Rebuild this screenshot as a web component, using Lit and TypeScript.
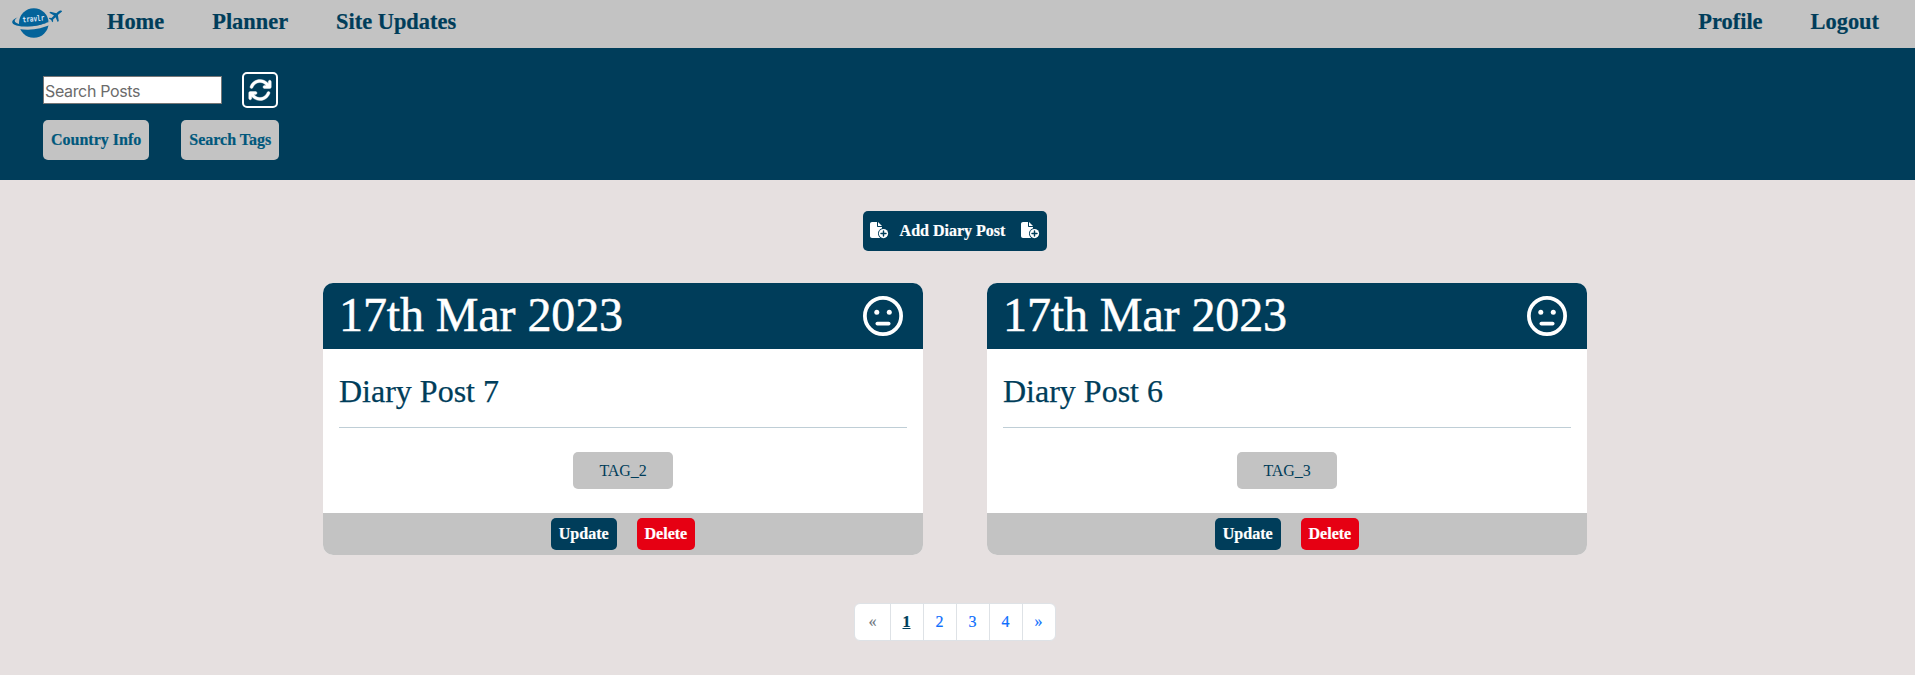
import { LitElement, html, css, svg } from "lit";
import { customElement, property } from "lit/decorators.js";

const fileCirclePlus = html`<svg class="file-icon" viewBox="0 0 576 512" fill="currentColor">${svg`<path d="M0 64C0 28.700 28.700 0 64 0H224V128c0 17.700 14.300 32 32 32H384v38.600C310.100 219.500 256 287.400 256 368c0 59.100 29.100 111.300 73.700 143.300c-3.200 .5-6.400 .7-9.700 .7H64c-35.300 0-64-28.700-64-64V64zm384 64H256V0L384 128z"/><circle cx="432" cy="368" r="148"/><path d="M432 288V448M352 368H512" stroke="#003d5a" stroke-width="46" stroke-linecap="round"/>`}</svg>`;

@customElement("diary-card")
export class DiaryCard extends LitElement {
  @property() date = "";
  @property() heading = "";
  @property() tag = "";

  static styles = css`
    :host { display: flex; flex-direction: column; width: 600px; height: 272px; border-radius: 10px; overflow: hidden; background: #fff; color: #003d5a; }
    .head { display: flex; justify-content: space-between; height: 66px; padding: 0 20px 0 16px; box-sizing: border-box; background: #003d5a; color: #fff; }
    .date { margin: 3px 0 0; font-size: 48px; font-weight: 400; line-height: 58px; letter-spacing: -0.1px; -webkit-text-stroke: 0.5px #fff; }
    .face { width: 40px; height: 40px; margin-top: 13px; }
    .body { flex: 1; padding: 0 16px; display: flex; flex-direction: column; align-items: center; }
    .title { align-self: stretch; margin: 0; padding: 23px 0 17px; font-size: 32px; font-weight: 400; line-height: 38px; border-bottom: 1px solid #bfced6; -webkit-text-stroke: 0.25px #003d5a; }
    .tag { margin-top: 24px; width: 100px; height: 37px; line-height: 37px; border-radius: 5px; background: #c3c3c3; text-align: center; font-size: 16px; letter-spacing: -0.1px; }
    .foot { display: flex; justify-content: center; align-items: center; gap: 20px; height: 42px; background: #c3c3c3; }
    .btn { height: 32px; padding: 0 8px; border: 0; border-radius: 5px; background: #003d5a; color: #fff; font: bold 16px/32px "Liberation Serif", serif; -webkit-text-stroke: 0.2px #fff; }
    .danger { background: #e60013; }
  `;

  render() {
    return html`
      <div class="head">
        <h1 class="date">${this.date}</h1>
        <svg class="face" viewBox="0 0 512 512">
          <circle cx="256" cy="256" r="232" fill="none" stroke="#fff" stroke-width="48" />
          <circle cx="176.400" cy="208" r="32" fill="#fff" />
          <circle cx="336.400" cy="208" r="32" fill="#fff" />
          <path d="M184 352H328" stroke="#fff" stroke-width="48" stroke-linecap="round" />
        </svg>
      </div>
      <div class="body">
        <h2 class="title">${this.heading}</h2>
        <div class="tag">${this.tag}</div>
      </div>
      <div class="foot">
        <button class="btn">Update</button>
        <button class="btn danger">Delete</button>
      </div>`;
  }
}

@customElement("app-root")
export class AppRoot extends LitElement {
  static styles = css`
    :host { display: block; min-height: 675px; background: #e6e0e0; font-family: "Liberation Serif", serif; color: #003d5a; }
    .nav { display: flex; align-items: center; gap: 48px; height: 48px; padding: 0 36px 0 11px; box-sizing: border-box; background: #c3c3c3; font-size: 22.4px; font-weight: bold; -webkit-text-stroke: 0.2px #003d5a; }
    .nav a { line-height: 34px; padding-bottom: 4px; }
    .logo { width: 52px; height: 32px; margin: 0 -4px 2px 0; -webkit-text-stroke: 0; }
    .logo text { font: bold 8px "DejaVu Sans Mono", monospace; fill: #dfe6f5; }
    .spacer { flex: 1; margin-left: -48px; }
    .banner { display: flex; flex-direction: column; gap: 12px; height: 132px; padding: 24px 43px 0; box-sizing: border-box; background: #003d5a; }
    .row { display: flex; align-items: center; }
    .search { width: 179px; height: 28px; box-sizing: border-box; margin: 0; padding: 1px 1px 0; border: 1px solid #767676; border-radius: 0; background: #fff; font: 16px Inter, sans-serif; letter-spacing: -0.35px; }
    .search::placeholder { color: #6b6b6b; }
    .refresh { display: flex; align-items: center; justify-content: center; width: 36px; height: 36px; margin-left: 20px; padding: 0 1px 0 0; box-sizing: border-box; border: 2px solid #fff; border-radius: 5px; background: none; color: #fff; }
    .refresh svg { width: 24px; height: 24px; stroke: #fff; stroke-width: 8; }
    .filters { gap: 32px; }
    .filter { height: 40px; padding: 0 8px; border: 0; border-radius: 5px; background: #c3c3c3; color: #00587c; font: bold 16px "Liberation Serif", serif; -webkit-text-stroke: 0.2px #00587c; }
    .main { display: flex; flex-direction: column; align-items: center; padding: 31px 5px 0 0; }
    .add { display: flex; align-items: center; justify-content: space-between; width: 184px; height: 40px; padding: 0 8px 0 7px; border: 0; border-radius: 5px; background: #003d5a; color: #fff; font: bold 16px "Liberation Serif", serif; -webkit-text-stroke: 0.2px #fff; }
    .add-label { margin-right: 4px; }
    .file-icon { display: block; width: 18px; height: 16px; margin-bottom: 2px; overflow: visible; }
    .cards { display: flex; gap: 64px; margin-top: 32px; }
    .pages { display: flex; height: 38px; box-sizing: border-box; margin: 48px 0 0; padding: 0; list-style: none; border: 1px solid #dee2e6; border-radius: 6px; background: #fff; overflow: hidden; font-size: 16px; line-height: 36px; color: #0d6efd; }
    .page { width: 33px; box-sizing: border-box; padding-right: 1px; border-left: 1px solid #dee2e6; text-align: center; -webkit-text-stroke: 0.2px currentColor; }
    .first { width: 35px; padding: 0; border-left: 0; color: #6c757d; }
    .current { color: #003d5a; font-weight: bold; text-decoration: underline; }
  `;

  render() {
    return html`
      <nav class="nav">
        <svg class="logo" viewBox="0 0 52 32">
          <circle cx="22.800" cy="16" r="14.800" fill="#04639a" />
          <path d="M6.500 10.500C-1 14.500-1 19 8 20.300C19 22 30 20.500 40 15.500" fill="none" stroke="#c3c3c3" stroke-width="3.600" />
          <path d="M7 10.200C.5 12.500-1.300 16.600 5.500 18.400C16 21 28 19.300 40 14.200C30 17.700 17 19.200 8 17C2 15.500 3 12.300 7 10.200Z" fill="#04639a" />
          <text x="11.500" y="14.500" textLength="22" lengthAdjust="spacingAndGlyphs" transform="rotate(-5 22 12)">travlr</text>
          <path d="M51 4C50.500 3 48.500 3.500 47 4.800L45.300 6.300L39.500 4.700L38.300 5.700L43 8.500L40.500 11L38.500 10.800L37.700 11.600L40.200 12.900L41.200 15.300L42.100 14.500L42.100 12.500L44.600 10.300L46.600 15L47.800 14L46.900 8L48.600 6.500C50 5.300 51.400 4.700 51 4Z" fill="#04639a" />
        </svg>
        <a>Home</a><a>Planner</a><a>Site Updates</a>
        <span class="spacer"></span>
        <a>Profile</a><a>Logout</a>
      </nav>
      <header class="banner">
        <div class="row">
          <input class="search" placeholder="Search Posts" />
          <button class="refresh">
            <svg viewBox="0 0 512 512" fill="currentColor"><path d="M105.100 202.600c7.700-21.800 20.200-42.300 37.800-59.800c62.500-62.500 163.800-62.500 226.300 0L386.300 160H352c-17.700 0-32 14.300-32 32s14.300 32 32 32H463.900c17.700 0 32-14.300 32-32V80c0-17.700-14.300-32-32-32s-32 14.300-32 32v35.200L414.400 97.600c-87.500-87.500-229.300-87.500-316.800 0C73.200 122 55.600 150.700 44.800 181.400c-5.900 16.700 2.900 34.900 19.500 40.800s34.900-2.900 40.800-19.500zM39 289.300c-5 1.500-9.800 4.200-13.700 8.200c-4 4-6.700 8.800-8.100 14c-.3 1.200-.6 2.500-.8 3.800c-.3 1.700-.4 3.400-.4 5.100V432c0 17.700 14.300 32 32 32s32-14.300 32-32V396.900l17.600 17.500c87.500 87.400 229.300 87.400 316.700 0c24.400-24.400 42.100-53.100 52.900-83.700c5.900-16.700-2.900-34.900-19.500-40.800s-34.900 2.900-40.800 19.500c-7.700 21.800-20.200 42.300-37.800 59.800c-62.500 62.500-163.800 62.500-226.300 0l-.1-.1L125.600 352H160c17.700 0 32-14.300 32-32s-14.300-32-32-32H48.400c-1.600 0-3.200 .1-4.800 .3s-3.100 .5-4.600 1z"/></svg>
          </button>
        </div>
        <div class="row filters">
          <button class="filter">Country Info</button>
          <button class="filter">Search Tags</button>
        </div>
      </header>
      <main class="main">
        <button class="add">${fileCirclePlus}<span class="add-label">Add Diary Post</span>${fileCirclePlus}</button>
        <section class="cards">
          <diary-card date="17th Mar 2023" heading="Diary Post 7" tag="TAG_2"></diary-card>
          <diary-card date="17th Mar 2023" heading="Diary Post 6" tag="TAG_3"></diary-card>
        </section>
        <ul class="pages">
          <li class="page first">«</li>
          <li class="page current">1</li>
          <li class="page">2</li>
          <li class="page">3</li>
          <li class="page">4</li>
          <li class="page">»</li>
        </ul>
      </main>`;
  }
}
